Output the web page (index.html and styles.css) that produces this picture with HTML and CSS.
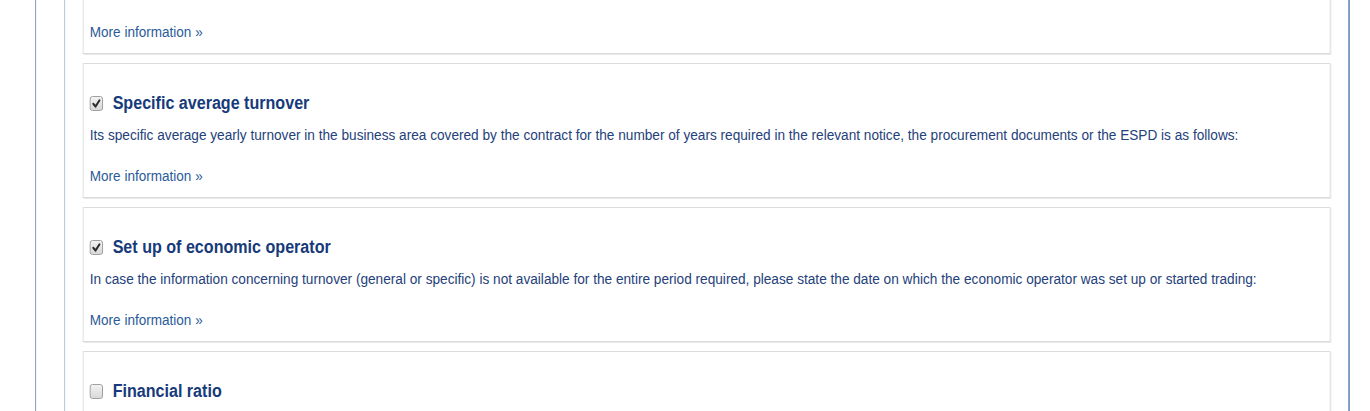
FILE: index.html
```html
<!DOCTYPE html>
<html lang="en">
<head>
<meta charset="utf-8">
<title>Economic and financial standing</title>
<link rel="stylesheet" href="styles.css">
</head>
<body>
<div class="stage">
  <div class="page">
    <div class="inner">
      <div class="cards">
        <section class="card">
          <div class="card-title">
            <span class="check checked"><svg viewBox="0 0 13 13"><path d="M3 6.8 L5.5 9.6 L10 3.4" /></svg></span>
            <h3>General yearly turnover</h3>
          </div>
          <p class="desc">Its general yearly turnover for the number of financial years required in the relevant notice, the procurement documents or the ESPD is as follows:</p>
          <a class="more" href="#">More information »</a>
        </section>
        <section class="card">
          <div class="card-title">
            <span class="check checked"><svg viewBox="0 0 13 13"><path d="M3 6.8 L5.5 9.6 L10 3.4" /></svg></span>
            <h3>Specific average turnover</h3>
          </div>
          <p class="desc">Its specific average yearly turnover in the business area covered by the contract for the number of years required in the relevant notice, the procurement documents or the ESPD is as follows:</p>
          <a class="more" href="#">More information »</a>
        </section>
        <section class="card">
          <div class="card-title">
            <span class="check checked"><svg viewBox="0 0 13 13"><path d="M3 6.8 L5.5 9.6 L10 3.4" /></svg></span>
            <h3>Set up of economic operator</h3>
          </div>
          <p class="desc">In case the information concerning turnover (general or specific) is not available for the entire period required, please state the date on which the economic operator was set up or started trading:</p>
          <a class="more" href="#">More information »</a>
        </section>
        <section class="card card-last">
          <div class="card-title">
            <span class="check"></span>
            <h3>Financial ratio</h3>
          </div>
        </section>
      </div>
    </div>
  </div>
</div>
</body>
</html>
```

FILE: styles.css
```css
html, body {
  margin: 0;
  padding: 0;
  background: #ffffff;
}

body {
  width: 1370px;
  height: 411px;
  overflow: hidden;
  font-family: "Liberation Sans", Arial, sans-serif;
}

.stage {
  width: 1557px;
  height: 411px;
  transform: scaleX(0.88);
  transform-origin: 0 0;
}

.page {
  margin-left: 40px;
  width: 1491px;
  height: 411px;
  border-left: 1px solid #6f90b8;
  border-right: 2px solid #7196bd;
}

.inner {
  margin-left: 32px;
  height: 411px;
  border-left: 1px solid #a8bbd3;
  padding-left: 20px;
  padding-right: 20px;
  overflow: hidden;
}

.cards {
  margin-top: -81px;
  display: flex;
  flex-direction: column;
  gap: 9px;
}

.card {
  border: 1px solid #dcdcdc;
  box-shadow: 1px 1px 0 #e8e8e8;
  background: #ffffff;
  padding: 29px 0 11px 7px;
  display: flex;
  flex-direction: column;
  align-items: flex-start;
}

.card-last {
  height: 100px;
}

.card-title {
  display: flex;
  align-items: center;
  height: 20px;
  gap: 11px;
}

.card-title h3 {
  margin: 0;
  font-size: 18.3px;
  line-height: 20px;
  font-weight: bold;
  color: #163a7a;
}

.check {
  width: 13px;
  height: 13px;
  border: 1px solid #9a9a9a;
  border-radius: 3px;
  background: linear-gradient(#f3f3f3, #d8d8d8);
  display: flex;
  align-items: center;
  justify-content: center;
  flex: none;
}

.check svg {
  width: 13px;
  height: 13px;
}

.check svg path {
  fill: none;
  stroke: #2b2b2b;
  stroke-width: 2.2;
  stroke-linecap: round;
  stroke-linejoin: round;
}

.desc {
  margin: 12px 0 0 0;
  font-size: 15.5px;
  line-height: 20px;
  color: #24417a;
  white-space: nowrap;
}

.more {
  margin-top: 21px;
  font-size: 15.4px;
  line-height: 20px;
  color: #2a5b98;
  text-decoration: none;
}
```
